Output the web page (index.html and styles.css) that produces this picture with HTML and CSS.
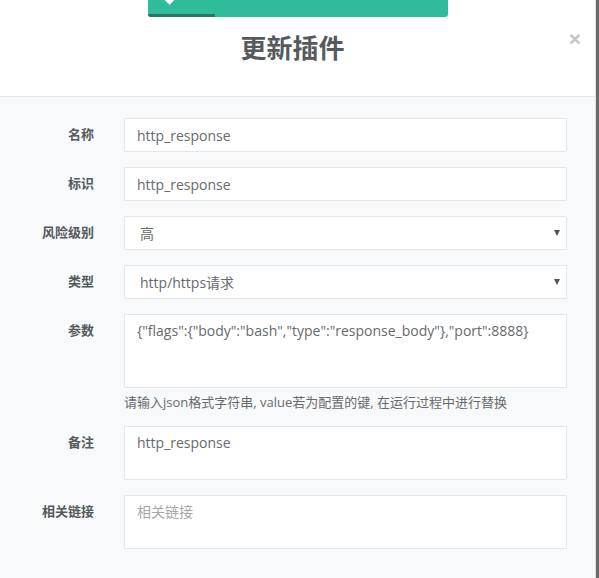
FILE: index.html
```html
<!DOCTYPE html>
<html lang="zh">
<head>
<meta charset="utf-8">
<title>更新插件</title>
<link rel="stylesheet" href="styles.css">
</head>
<body>
<div class="modal">
  <div class="modal-header">
    <h4 class="modal-title">更新插件</h4>
    <span class="close">×</span>
  </div>
  <div class="modal-body">
    <div class="row">
      <label class="label">名称</label>
      <input class="control" type="text" value="http_response">
    </div>
    <div class="row">
      <label class="label">标识</label>
      <input class="control" type="text" value="http_response">
    </div>
    <div class="row">
      <label class="label">风险级别</label>
      <div class="select-wrap"><select class="control select"><option>高</option></select></div>
    </div>
    <div class="row">
      <label class="label">类型</label>
      <div class="select-wrap"><select class="control select"><option>http/https请求</option></select></div>
    </div>
    <div class="row">
      <label class="label">参数</label>
      <div class="field">
        <textarea class="control area area-lg">{"flags":{"body":"bash","type":"response_body"},"port":8888}</textarea>
        <span class="help">请输入json格式字符串, value若为配置的键, 在运行过程中进行替换</span>
      </div>
    </div>
    <div class="row">
      <label class="label">备注</label>
      <textarea class="control area">http_response</textarea>
    </div>
    <div class="row">
      <label class="label">相关链接</label>
      <textarea class="control area" placeholder="相关链接"></textarea>
    </div>
  </div>
</div>
<div class="toast">
  <span class="toast-icon"></span>
  <span class="toast-progress"></span>
</div>
</body>
</html>
```
FILE: styles.css
```css
html, body {
  margin: 0;
  padding: 0;
}
body {
  background: #6a6a6a;
  font-family: "Open Sans", "Noto Sans CJK SC", sans-serif;
  color: #676a6c;
  width: 599px;
  height: 578px;
  overflow: hidden;
  position: relative;
}
.modal {
  width: 595px;
  height: 578px;
  background: #f8f9fb;
  border-right: 1px solid #e2e2e2;
}
.modal-header {
  position: relative;
  height: 96px;
  background: #fff;
  border-bottom: 1px solid #e4e5e7;
  display: flex;
  align-items: center;
  justify-content: center;
}
.modal-title {
  margin: 0;
  font-size: 26px;
  font-weight: 700;
  color: #555a5c;
  line-height: 1;
  padding-right: 10px;
}
.close {
  position: absolute;
  right: 14px;
  top: 27px;
  font-size: 21px;
  font-weight: 700;
  color: #c4c4c4;
  font-family: "Liberation Sans", sans-serif;
}
.modal-body {
  padding: 21px 29px 0 0;
  display: flex;
  flex-direction: column;
  gap: 15px;
}
.row {
  display: grid;
  grid-template-columns: 94px 443px;
  column-gap: 30px;
  align-items: start;
}
.label {
  text-align: right;
  font-size: 13px;
  font-weight: 700;
  color: #555a5c;
  padding-top: 7px;
  line-height: 18px;
}
.control {
  box-sizing: border-box;
  width: 443px;
  height: 34px;
  margin: 0;
  border: 1px solid #e5e6e7;
  border-radius: 1px;
  background: #fff;
  font-family: "Open Sans", "Noto Sans CJK SC", sans-serif;
  font-size: 14px;
  color: #676a6c;
  padding: 6px 12px;
  outline: none;
}
.select-wrap {
  position: relative;
  width: 443px;
}
.select {
  -webkit-appearance: none;
  appearance: none;
  padding-left: 15px;
}
.select-wrap::after {
  content: "";
  position: absolute;
  right: 7px;
  top: 14px;
  border-left: 3.5px solid transparent;
  border-right: 3.5px solid transparent;
  border-top: 6px solid #555;
}
.field {
  display: flex;
  flex-direction: column;
  gap: 5px;
}
.area {
  resize: none;
  height: 54px;
  line-height: 20px;
  padding-top: 6px;
  display: block;
}
.area-lg {
  height: 74px;
}
.area::placeholder {
  color: #a5a7a9;
}
.help {
  font-size: 13px;
  color: #676a6c;
  line-height: 18px;
}
.toast {
  position: absolute;
  left: 148px;
  top: 0;
  width: 300px;
  height: 17px;
  background: #2fbc9b;
  border-radius: 0 0 3px 3px;
  overflow: hidden;
}
.toast-icon {
  position: absolute;
  left: 17px;
  top: -6px;
  width: 9px;
  height: 9px;
  background: #fff;
  transform: rotate(45deg);
}
.toast-progress {
  position: absolute;
  left: 0;
  bottom: 0;
  width: 67px;
  height: 3px;
  background: #2f7565;
}
```
